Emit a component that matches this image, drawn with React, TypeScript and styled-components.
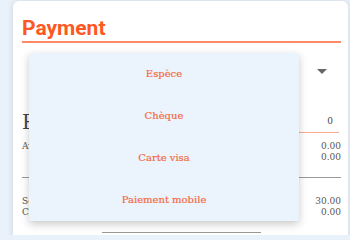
import React from "react";
import styled, { createGlobalStyle } from "styled-components";

const GlobalStyle = createGlobalStyle`
  html, body {
    margin: 0;
    padding: 0;
    background: #e9f1fb;
    width: 350px;
    height: 235px;
    overflow: hidden;
  }
`;

const Page = styled.div`
  height: 235px;
  padding: 1px 2px 0 13px;
  box-sizing: border-box;
  overflow: hidden;
`;

const Card = styled.div`
  position: relative;
  background: #ffffff;
  border-radius: 6px 6px 0 0;
  box-shadow: 0 0 6px rgba(0, 0, 0, 0.12);
  padding: 15px 7px 0 9px;
  height: 260px;
  font-family: "DejaVu Serif", serif;
  color: #555;
`;

const Title = styled.h1`
  margin: 0;
  font-family: Roboto, "Liberation Sans", sans-serif;
  font-weight: 700;
  font-size: 21px;
  line-height: 24px;
  color: #ff5722;
  padding-bottom: 1px;
  border-bottom: 2px solid #ff8a65;
`;

const SelectRow = styled.div`
  display: flex;
  justify-content: flex-end;
  align-items: center;
  height: 68px;
  padding-right: 14px;
`;

const Caret = styled.div`
  width: 0;
  height: 0;
  border-left: 5px solid transparent;
  border-right: 5px solid transparent;
  border-top: 5px solid #666;
  margin-top: -12px;
`;

const TotalRow = styled.div`
  display: flex;
  justify-content: space-between;
  align-items: flex-end;
`;

const BigLabel = styled.span`
  font-size: 20px;
  line-height: 22px;
  color: #444;
`;

const AmountInput = styled.span`
  width: 35px;
  text-align: right;
  font-size: 9px;
  color: #444;
  padding: 0 6px 6px 0;
  margin-right: 2px;
  border-bottom: 1.5px solid #ffab91;
`;

const Lines = styled.div<{ $gap: number }>`
  display: flex;
  flex-direction: column;
  margin-top: ${(p) => p.$gap}px;
`;

const Line = styled.div`
  display: flex;
  justify-content: space-between;
  font-size: 9px;
  line-height: 11px;
  color: #555;
`;

const Rule = styled.hr<{ $inset: number; $top: number }>`
  border: none;
  border-top: 1px solid #999;
  margin: ${(p) => p.$top}px ${(p) => p.$inset}px 0 ${(p) => p.$inset}px;
`;

const Menu = styled.ul`
  position: absolute;
  left: 16px;
  top: 52px;
  width: 270px;
  margin: 0;
  padding: 0;
  list-style: none;
  background: #ebf3fc;
  box-shadow: 0 3px 8px rgba(0, 0, 0, 0.22);
  border-radius: 2px;
`;

const MenuItem = styled.li`
  height: 41px;
  display: flex;
  align-items: center;
  justify-content: center;
  font-family: "DejaVu Serif", serif;
  font-size: 10px;
  color: #f26a43;
  -webkit-text-stroke: 0.2px #f26a43;
  padding-bottom: 1px;
`;

const options = ["Espèce", "Chèque", "Carte visa", "Paiement mobile"];

export default function App() {
	return (
		<>
			<GlobalStyle />
			<Page>
				<Card>
					<Title>Payment</Title>
					<SelectRow>
						<Caret />
					</SelectRow>
					<TotalRow>
						<BigLabel>Payé</BigLabel>
						<AmountInput>0</AmountInput>
					</TotalRow>
					<Lines $gap={8}>
						<Line><span>Avance</span><span>0.00</span></Line>
						<Line><span></span><span>0.00</span></Line>
					</Lines>
					<Rule $inset={0} $top={14} />
					<Lines $gap={18}>
						<Line><span>Sous-total</span><span>30.00</span></Line>
						<Line><span>Change</span><span>0.00</span></Line>
					</Lines>
					<Rule $inset={80} $top={14} />
					<Menu>
						{options.map((o) => (
							<MenuItem key={o}>{o}</MenuItem>
						))}
					</Menu>
				</Card>
			</Page>
		</>
	);
}
